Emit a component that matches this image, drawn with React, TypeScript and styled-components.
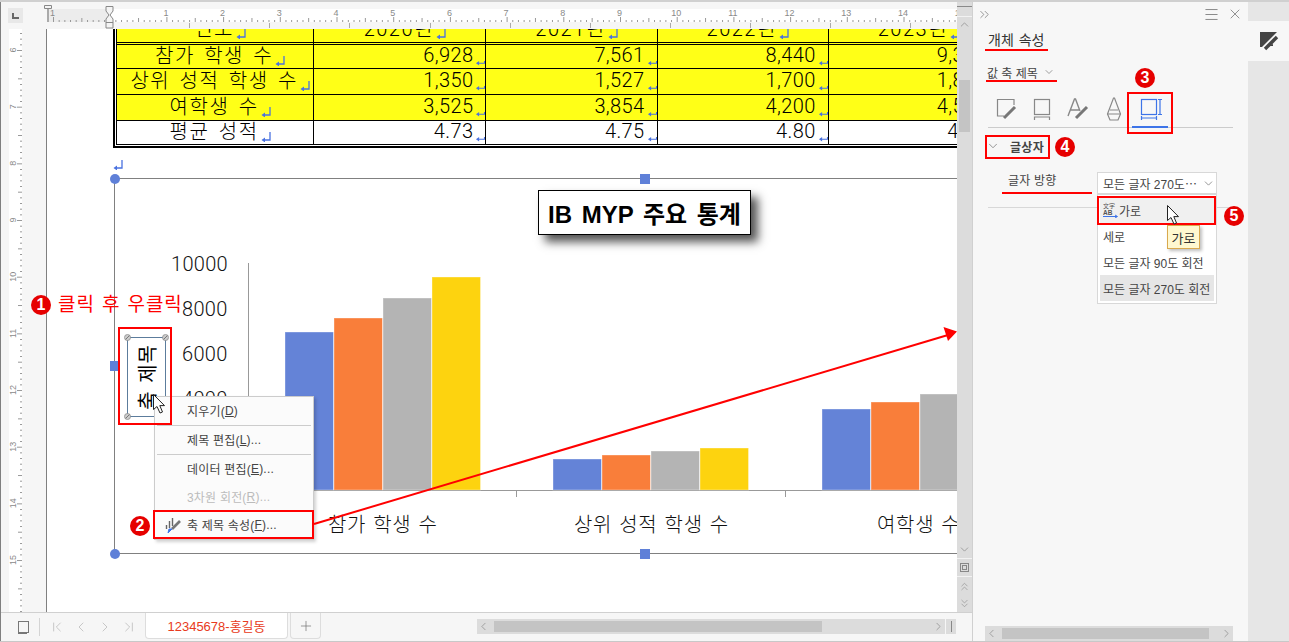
import * as React from 'react';
import styled, { createGlobalStyle } from 'styled-components';
import {
    ChevronDown,
    ChevronFirst,
    ChevronLast,
    ChevronLeft,
    ChevronRight,
    ChevronUp,
    ChevronsDown,
    ChevronsRight,
    ChevronsUp,
    Menu as MenuIcon,
    Plus,
    X,
} from 'lucide-react';

const UI_FONT = '"Liberation Sans", "Noto Sans CJK KR", sans-serif';
const THIN_FONT = 'Roboto, "Noto Sans CJK KR", sans-serif';

const GlobalStyle = createGlobalStyle`
    html, body {
        margin: 0;
        padding: 0;
        overflow: hidden;
        background: #fff;
    }
    * {
        box-sizing: border-box;
    }
`;

const Shell = styled.div`
    position: relative;
    display: flex;
    width: 1289px;
    height: 642px;
    overflow: hidden;
    border-top: 2px solid #d0d0d0;
    border-bottom: 1px solid #c8c8c8;
    background: #f6f6f6;
    font-family: ${UI_FONT};
    color: #444;
`;

const EditorColumn = styled.div`
    display: flex;
    flex-direction: column;
    width: 973px;
    flex-shrink: 0;
    border-left: 1px solid #808080;
    border-right: 1px solid #d0d0d0;
`;

const EditorTop = styled.div`
    display: flex;
    height: 610px;
`;

const EditorMain = styled.div`
    display: flex;
    flex-direction: column;
    width: 956px;
`;

const RulerRow = styled.div`
    display: flex;
    height: 27px;
    flex-shrink: 0;
`;

const RulerCorner = styled.div`
    width: 15px;
    height: 15px;
    margin: 6px 0 0 7px;
    background: #e8e8e8;
    display: flex;
    align-items: center;
    justify-content: center;
    flex-shrink: 0;
`;

const CornerMark = styled.span`
    display: block;
    width: 7px;
    height: 6px;
    border-left: 2px solid #666;
    border-bottom: 2px solid #666;
`;

const RulerSvg = styled.svg`
    display: block;
    margin-left: 20px;
    flex-shrink: 0;
`;

const RulerLabel = styled.text`
    font-family: ${UI_FONT};
    font-size: 9px;
    fill: #8a8a8a;
`;

const BodyRow = styled.div`
    display: flex;
    flex: 1;
    min-height: 0;
`;

const SideRuler = styled.svg`
    display: block;
    width: 46px;
    height: 583px;
    flex-shrink: 0;
    border-right: 1px solid #808080;
`;

const Page = styled.div`
    position: relative;
    width: 910px;
    height: 583px;
    overflow: hidden;
    background: #fff;
`;

const TableFrame = styled.div`
    width: 1000px;
    margin: -11px 0 0 66px;
    padding: 0 1px 1px 1px;
    border-left: 2px solid #000;
    border-bottom: 2px solid #000;
`;

const DataTable = styled.table`
    border-collapse: separate;
    border-spacing: 0;
    table-layout: fixed;
    width: 884px;
    border-left: 1px solid #000;
    color: #000;
`;

const Cell = styled.td<{ $head?: boolean; $plain?: boolean; $h: number; $num?: boolean; $name?: boolean }>`
    height: ${p => p.$h}px;
    padding: 0 0 2px ${p => (p.$name ? '10px' : '0')};
    background: ${p => (p.$plain ? '#fff' : '#ffff17')};
    border-right: 1px solid #000;
    border-bottom: ${p => (p.$head ? '3px double #000' : '1px solid #000')};
    text-align: ${p => (p.$num ? 'right' : 'center')};
    white-space: nowrap;
    font-family: ${THIN_FONT};
    font-size: 20px;
    font-weight: 300;
    line-height: 20px;
    letter-spacing: ${p => (p.$num ? '0.4px' : '1.5px')};
    word-spacing: 3px;
    vertical-align: middle;
`;

const ReturnSvg = styled.svg<{ $small?: boolean }>`
    display: inline-block;
    width: ${p => (p.$small ? 9 : 10)}px;
    height: 10px;
    margin-left: ${p => (p.$small ? 3 : 2)}px;
    vertical-align: ${p => (p.$small ? '-4px' : '-3px')};
`;

const ReturnMark: React.FC<{ small?: boolean }> = ({ small }) => (
    <ReturnSvg $small={small} viewBox="0 0 10 10" fill="none" stroke="#4a72e0" strokeWidth="1.3">
        {small ? (
            <>
                <path d="M1 7.5H9.5M9.5 5V8" />
                <path d="M3.5 5V10L0 7.5Z" fill="#4a72e0" stroke="none" />
            </>
        ) : (
            <>
                <path d="M9 0V8H2" />
                <path d="M4 5.5V10.5L0.5 8Z" fill="#4a72e0" stroke="none" />
            </>
        )}
    </ReturnSvg>
);

const AnchorMark = styled.div`
    height: 30px;
    margin-left: 64px;
    padding-top: 9px;
    line-height: 10px;
`;

const ChartFrame = styled.div`
    position: relative;
    width: 900px;
    height: 376px;
    margin-left: 67px;
    border-left: 1px solid #808080;
    border-top: 1px solid #808080;
    border-bottom: 1px solid #808080;
`;

const ChartSvg = styled.svg`
    position: absolute;
    left: -1px;
    top: -1px;
    display: block;
`;

const AxisText = styled.text<{ $wide?: boolean }>`
    font-family: ${THIN_FONT};
    font-weight: 300;
    font-size: 20px;
    letter-spacing: ${p => (p.$wide ? '0.7px' : '0.3px')};
    word-spacing: ${p => (p.$wide ? '1.5px' : '0')};
    fill: #111;
    dominant-baseline: middle;
`;

const Handle = styled.span<{ $x: number; $y: number; $round?: boolean }>`
    position: absolute;
    left: ${p => p.$x - 5}px;
    top: ${p => p.$y - 5}px;
    width: 10px;
    height: 10px;
    background: #5f80d8;
    border-radius: ${p => (p.$round ? '50%' : '0')};
`;

const ChartTitle = styled.div`
    position: absolute;
    left: 423px;
    top: 11px;
    width: 213px;
    height: 45px;
    display: flex;
    align-items: center;
    justify-content: center;
    background: #fff;
    border: 1px solid #000;
    box-shadow: 7px 7px 9px #555;
    color: #000;
    font-size: 24px;
    font-weight: 700;
    word-spacing: 3px;
    white-space: nowrap;
`;

const AxisTitleBox = styled.div`
    position: absolute;
    left: 12px;
    top: 158px;
    width: 39px;
    height: 80px;
    display: flex;
    align-items: center;
    justify-content: center;
    border: 1px solid #5c7c9c;
`;

const AxisTitleText = styled.span`
    writing-mode: vertical-rl;
    text-orientation: sideways;
    transform: rotate(180deg);
    color: #000;
    font-size: 20px;
    font-weight: 400;
    letter-spacing: 1px;
    word-spacing: 1px;
    white-space: nowrap;
`;

const Grip = styled.span<{ $right?: boolean; $bottom?: boolean }>`
    position: absolute;
    ${p => (p.$right ? 'right: -4px;' : 'left: -4px;')}
    ${p => (p.$bottom ? 'bottom: -4px;' : 'top: -4px;')}
    width: 7px;
    height: 7px;
    border-radius: 50%;
    background: linear-gradient(135deg, #ccc 0 42%, #777 42% 58%, #ccc 58% 100%);
    border: 1px solid #999;
`;

const VScroll = styled.div`
    display: flex;
    flex-direction: column;
    width: 15px;
    flex-shrink: 0;
    background: #dcdcdc;
    color: #8e8e8e;
`;

const SplitTop = styled.div`
    height: 11px;
    margin-top: 4px;
    border-top: 1px solid #8a8a8a;
    border-bottom: 1px solid #f2f2f2;
    flex-shrink: 0;
`;

const ScrollBtn = styled.div<{ $h: number; $line?: boolean }>`
    height: ${p => p.$h}px;
    display: flex;
    align-items: center;
    justify-content: center;
    flex-shrink: 0;
    border-bottom: ${p => (p.$line ? '1px solid #f2f2f2' : 'none')};
`;

const VTrack = styled.div`
    flex: 1;
    padding: 49px 2px 0;
`;

const VThumb = styled.div`
    height: 52px;
    background: #c4c4c4;
`;

const TabBar = styled.div`
    display: flex;
    align-items: flex-start;
    height: 29px;
    flex-shrink: 0;
    border-top: 1px solid #d0d0d0;
    color: #bbb;
`;

const SheetIcon = styled.div`
    width: 11px;
    height: 12px;
    margin: 8px 10px 0 17px;
    border: 1px solid #777;
    box-shadow: -1px 2px 0 -1px #777;
`;

const NavDivider = styled.div`
    width: 1px;
    height: 18px;
    margin: 5px 5px 0 0;
    background: #d4d4d4;
`;

const NavButton = styled.div`
    width: 24px;
    height: 28px;
    display: flex;
    align-items: center;
    justify-content: center;
    flex-shrink: 0;
`;

const SheetTab = styled.div`
    width: 143px;
    height: 26px;
    margin-left: 4px;
    display: flex;
    align-items: center;
    justify-content: center;
    background: #fff;
    border: 1px solid #ddd;
    border-top: none;
    border-radius: 0 0 4px 4px;
    color: #e83a20;
    font-size: 13px;
    flex-shrink: 0;
`;

const AddTab = styled.div`
    width: 31px;
    height: 26px;
    margin-left: 2px;
    display: flex;
    align-items: center;
    justify-content: center;
    border: 1px solid #ddd;
    border-top: none;
    border-radius: 0 0 4px 4px;
    color: #777;
    flex-shrink: 0;
`;

const Splitter = styled.div`
    width: 3px;
    height: 28px;
    margin-left: 152px;
    background-image: radial-gradient(#777 45%, transparent 50%);
    background-size: 2px 2px;
    flex-shrink: 0;
`;

const HScroll = styled.div<{ $w: number }>`
    display: flex;
    align-items: center;
    justify-content: space-between;
    width: ${p => p.$w}px;
    height: 15px;
    background: #dcdcdc;
    color: #888;
    flex-shrink: 0;
`;

const HScrollSlot = styled.div`
    margin: 6px 0 0 1px;
`;

const HThumb = styled.div<{ $w: number; $left: number }>`
    position: relative;
    flex: none;
    width: ${p => p.$w}px;
    height: 11px;
    margin-left: ${p => p.$left}px;
    margin-right: auto;
    background: #c4c4c4;
`;

const SplitEnd = styled.div`
    width: 10px;
    height: 15px;
    margin: 6px 0 0 1px;
    background: #dcdcdc;
    display: flex;
    justify-content: center;
    align-items: center;
`;

const SplitEndLine = styled.span`
    width: 1px;
    height: 11px;
    background: #888;
`;

const Panel = styled.aside`
    position: relative;
    display: flex;
    flex-direction: column;
    width: 275px;
    flex-shrink: 0;
    background: #f7f7f7;
`;

const PanelHead = styled.div`
    display: flex;
    align-items: center;
    height: 24px;
    padding: 0 1px 0 4px;
    color: #777;
`;

const PanelHeadGap = styled.div`
    flex: 1;
`;

const PanelHeadBtn = styled.div`
    width: 24px;
    display: flex;
    justify-content: center;
`;

const PanelTitle = styled.div`
    height: 28px;
    margin-left: 15px;
    line-height: 28px;
    font-size: 14px;
    color: #333;
    word-spacing: 1px;
`;

const ObjectPicker = styled.div`
    display: flex;
    align-items: center;
    gap: 5px;
    height: 24px;
    margin: 6px 0 0 14px;
    font-size: 12px;
    color: #444;
`;

const IconTabs = styled.div`
    display: flex;
    height: 35px;
    margin: 9px 15px 0;
    border-bottom: 1px solid #ccc;
`;

const IconTab = styled.div<{ $active?: boolean }>`
    width: 36px;
    height: 35px;
    display: flex;
    justify-content: center;
    padding-top: 1px;
    border-bottom: ${p => (p.$active ? '2px solid #3d74e8' : 'none')};
`;

const SectionHead = styled.div`
    display: flex;
    align-items: center;
    height: 22px;
    margin: 7px 0 0 13px;
    font-size: 12px;
    font-weight: 700;
    color: #444;
`;

const SectionLabel = styled.span`
    margin-left: 10px;
    letter-spacing: 0.3px;
`;

const FieldRow = styled.div`
    position: relative;
    display: flex;
    height: 36px;
    margin: 15px 15px 0;
    border-bottom: 1px solid #d8d8d8;
`;

const FieldLabel = styled.div`
    width: 109px;
    height: 21px;
    padding-left: 20px;
    line-height: 18px;
    font-size: 12px;
    letter-spacing: 0.2px;
`;

const SelectBox = styled.div`
    position: relative;
    width: 120px;
    height: 22px;
    display: flex;
    align-items: center;
    justify-content: space-between;
    padding: 0 1px 0 5px;
    background: #fff;
    border: 1px solid #d8d8d8;
    font-size: 12px;
    white-space: nowrap;
`;

const OptionList = styled.div`
    position: absolute;
    left: -1px;
    top: 21px;
    width: 120px;
    padding: 2px;
    background: #fff;
    border: 1px solid #d8d8d8;
`;

const Option = styled.div<{ $hover?: boolean; $selected?: boolean }>`
    display: flex;
    align-items: center;
    height: 26px;
    padding-left: 3px;
    font-size: 12px;
    background: ${p => (p.$selected ? '#e6e6e6' : p.$hover ? '#f0f0f0' : 'transparent')};
`;

const TipBox = styled.div`
    position: absolute;
    left: 69px;
    top: 30px;
    width: 33px;
    height: 24px;
    display: flex;
    align-items: center;
    justify-content: center;
    background: #fff8d0;
    border: 1px solid #d9a94e;
    box-shadow: 2px 2px 3px rgba(0, 0, 0, 0.25);
    font-size: 13px;
    color: #333;
`;

const PanelFoot = styled.div`
    margin: auto 15px 0 12px;
`;

const Rail = styled.div`
    flex: 1;
    padding-top: 19px;
    background: #e6e6e6;
`;

const RailTab = styled.div`
    height: 40px;
    display: flex;
    align-items: center;
    justify-content: center;
    background: #f7f7f7;
`;

const ContextMenu = styled.div`
    position: absolute;
    left: 154px;
    top: 394px;
    width: 160px;
    background: #fbfbfb;
    border: 1px solid #ccc;
    box-shadow: 2px 2px 3px rgba(0, 0, 0, 0.18);
    font-size: 12px;
    letter-spacing: 0.2px;
    color: #444;
`;

const MenuItem = styled.div<{ $disabled?: boolean }>`
    display: flex;
    align-items: center;
    height: 28px;
    padding-left: 32px;
    padding-bottom: 1px;
    position: relative;
    color: ${p => (p.$disabled ? '#bbb' : '#444')};
    white-space: nowrap;
`;

const MenuIconBox = styled.span`
    position: absolute;
    left: 9px;
    top: 5px;
    display: flex;
`;

const MenuLine = styled.div`
    height: 1px;
    margin: 0 2px;
    background: #ccc;
`;

const RedBox = styled.div<{ $x: number; $y: number; $w: number; $h: number }>`
    position: absolute;
    left: ${p => p.$x}px;
    top: ${p => p.$y - 2}px;
    width: ${p => p.$w}px;
    height: ${p => p.$h}px;
    border: 2px solid #f00;
    pointer-events: none;
`;

const RedLine = styled.div<{ $x: number; $y: number; $w: number }>`
    position: absolute;
    left: ${p => p.$x}px;
    top: ${p => p.$y - 2}px;
    width: ${p => p.$w}px;
    height: 2px;
    background: #f00;
`;

const Badge = styled.div<{ $x: number; $y: number }>`
    position: absolute;
    left: ${p => p.$x - 10}px;
    top: ${p => p.$y - 12}px;
    width: 20px;
    height: 20px;
    border-radius: 50%;
    background: #e60000;
    display: flex;
    align-items: center;
    justify-content: center;
    color: #fff;
    font-size: 16px;
    font-weight: 700;
`;

const RedNote = styled.div`
    position: absolute;
    left: 58px;
    top: 291px;
    color: #f00;
    font-size: 19px;
    letter-spacing: 0.9px;
    word-spacing: 1px;
    line-height: 24px;
    white-space: nowrap;
`;

const OverlaySvg = styled.svg`
    position: absolute;
    left: 0;
    top: -2px;
    pointer-events: none;
`;

const CursorSvg = styled.svg<{ $x: number; $y: number }>`
    position: absolute;
    left: ${p => p.$x}px;
    top: ${p => p.$y - 2}px;
    pointer-events: none;
`;

const Cursor: React.FC<{ x: number; y: number }> = ({ x, y }) => (
    <CursorSvg $x={x} $y={y} width="14" height="20" viewBox="0 0 14 20">
        <path d="M.5.5V15.5L4 12.5L7 19L9.5 18L6.8 11.6H11.5Z" fill="#fff" stroke="#222" strokeWidth="1" />
    </CursorSvg>
);

const rows = [
    { name: '참가 학생 수', values: ['6,928', '7,561', '8,440', '9,300'], h: 24 },
    { name: '상위 성적 학생 수', values: ['1,350', '1,527', '1,700', '1,850'], h: 26 },
    { name: '여학생 수', values: ['3,525', '3,854', '4,200', '4,500'], h: 26 },
    { name: '평균 성적', values: ['4.73', '4.75', '4.80', '4.85'], h: 23, plain: true },
];

const years = ['2020년', '2021년', '2022년', '2023년'];

const barColors = ['#6483d7', '#f97e3a', '#b4b4b4', '#fdd30f'];

const barGroups = [
    { x: 285, tops: [332, 318, 298, 277] },
    { x: 553, tops: [459, 455, 451, 448] },
    { x: 822, tops: [409, 402, 394, 380] },
];

const range = (n: number) => Array.from({ length: n }, (_, i) => i);

const TopRulerDrawing = () => {
    const labels = ['1', '', '1', '2', '3', '4', '5', '6', '7', '8', '9', '10', '11', '12', '13', '14', '15'];
    const tabs = [189, 269, 349, 430, 510, 590, 670, 750, 830, 910];
    return (
        <RulerSvg width="914" height="27" viewBox="43 2 914 27">
            <rect x="47" y="9" width="910" height="13" fill="#fff" />
            <rect x="47" y="9" width="63" height="13" fill="#ececec" />
            <rect x="47" y="6" width="2" height="16" fill="#aaa" />
            {range(160).map(i => {
                const x = 53 + i * 5.67;
                const major = i % 10 === 0;
                const mid = i % 5 === 0;
                return (
                    <rect key={i} x={x} y={major ? 17 : mid ? 18 : 20} width="1" height={major ? 5 : mid ? 4 : 2} fill="#999" />
                );
            })}
            {labels.map((l, i) => (
                <RulerLabel key={i} x={52.5 + i * 56.7} y="16" textAnchor="middle">
                    {l}
                </RulerLabel>
            ))}
            {tabs.map(x => (
                <rect key={x} x={x} y="23" width="1" height="5" fill="#aaa" />
            ))}
            <path d="M44.5 5.5H51.5V8.5H44.5Z" fill="#f4f4f4" stroke="#888" />
            <path d="M106 6.5H113V11L110 15L113 19V28H106V19L109 15L106 11Z" fill="#f4f4f4" stroke="#888" />
            <path d="M106 22.5H113" stroke="#888" />
        </RulerSvg>
    );
};

const SideRulerDrawing = () => (
    <SideRuler viewBox="1 29 45 583">
        <rect x="9" y="29" width="13" height="583" fill="#fff" />
        {range(120).map(i => {
            const y = 50 - 56.67 + i * 5.667;
            const major = i % 10 === 0;
            const mid = i % 5 === 0;
            return <rect key={i} x={major ? 17 : mid ? 18 : 20} y={y} width={major ? 5 : mid ? 4 : 2} height="1" fill="#999" />;
        })}
        {range(10).map(i => (
            <RulerLabel key={i} textAnchor="middle" transform={`translate(16 ${50 + i * 56.67}) rotate(-90)`} y="0">
                {6 + i}
            </RulerLabel>
        ))}
    </SideRuler>
);

const ChartDrawing = () => (
    <ChartSvg width="843" height="376" viewBox="114 178 843 376">
        <path d="M248.5 263V490.5H957M516.5 490V497M785.5 490V497M248.5 490V497" fill="none" stroke="#999" />
        {barGroups.map(g =>
            g.tops.map((top, i) => (
                <rect
                    key={`${g.x}-${i}`}
                    x={g.x + i * 49}
                    y={top}
                    width="48.5"
                    height={490 - top}
                    fill={barColors[i]}
                    stroke="#fff"
                    strokeOpacity="0.35"
                />
            )),
        )}
        <AxisText x="171" y="266">10000</AxisText>
        <AxisText x="182" y="311">8000</AxisText>
        <AxisText x="182" y="356">6000</AxisText>
        <AxisText x="182" y="401">4000</AxisText>
        <AxisText x="328" y="527" $wide>참가 학생 수</AxisText>
        <AxisText x="574" y="527" $wide>상위 성적 학생 수</AxisText>
        <AxisText x="877" y="527" $wide>여학생 수</AxisText>
    </ChartSvg>
);

const FillTabIcon = () => (
    <svg width="24" height="30" viewBox="0 0 24 30" fill="none" stroke="#888" strokeWidth="1.2">
        <path d="M10 22H3.5V5.5H20V11" />
        <path d="M21 13L10 24" stroke="#777" strokeWidth="3" />
    </svg>
);

const LineTabIcon = () => (
    <svg width="24" height="30" viewBox="0 0 24 30" fill="none" stroke="#888" strokeWidth="1.2">
        <rect x="4.5" y="5.5" width="15" height="15" />
        <path d="M4.5 26V23H19.5V26" />
    </svg>
);

const TextFillIcon = () => (
    <svg width="24" height="30" viewBox="0 0 24 30" fill="none" stroke="#888" strokeWidth="1.4">
        <path d="M2 22L8.5 5H9.5L14 17M4.5 16H13" />
        <path d="M21 13L10 24" stroke="#777" strokeWidth="3" />
    </svg>
);

const TextLineIcon = () => (
    <svg width="24" height="30" viewBox="0 0 24 30" fill="none" stroke="#888" strokeWidth="1.2">
        <path d="M11.5 4H12.5L18.5 20L16 26H8L5.5 20Z" />
        <path d="M8 16H16M5.5 20H18.5" />
    </svg>
);

const BoxTabIcon = () => (
    <svg width="24" height="30" viewBox="0 0 24 30" fill="none" stroke="#3d74e8" strokeWidth="1.2">
        <rect x="3.5" y="5.5" width="15" height="15" />
        <path d="M20 5.5H24M22 5.5V20.5M20 20.5H24M3.5 22V26M3.5 24H18.5M18.5 22V26" />
    </svg>
);

const RailPenIcon = () => (
    <svg width="22" height="22" viewBox="0 0 22 22">
        <path d="M2 2H19L8 13L4 17H2Z" fill="#444" />
        <path d="M19 7L7 19" stroke="#444" strokeWidth="3.4" fill="none" />
        <path d="M15 14V16H10Z" fill="#444" />
    </svg>
);

const AxisPropIcon = () => (
    <svg width="18" height="18" viewBox="0 0 18 18" fill="none">
        <path d="M2.5 9V13M5.5 5V12M8.5 2V10" stroke="#666" strokeWidth="1.4" />
        <path d="M16 5L8 13" stroke="#777" strokeWidth="2.6" />
        <path d="M8 13L4 17L5 13Z" fill="#3d74e8" stroke="#3d74e8" />
    </svg>
);

const HorizontalIcon = () => (
    <svg width="16" height="16" viewBox="0 0 16 16" fill="#555">
        <text x="0" y="6" fontSize="6" fontFamily={UI_FONT}>文字</text>
        <text x="0" y="12.5" fontSize="6.5" fontWeight="700" fontFamily={UI_FONT}>AB</text>
        <path d="M0 14.5H14M12 13L14.5 14.5L12 16" stroke="#3d74e8" fill="none" />
    </svg>
);

export default function App() {
    return (
        <>
            <GlobalStyle />
            <Shell>
                <EditorColumn>
                    <EditorTop>
                        <EditorMain>
                            <RulerRow>
                                <RulerCorner>
                                    <CornerMark />
                                </RulerCorner>
                                <TopRulerDrawing />
                            </RulerRow>
                            <BodyRow>
                                <SideRulerDrawing />
                                <Page>
                                    <TableFrame>
                                        <DataTable>
                                            <colgroup>
                                                <col width="197" />
                                                <col width="172" />
                                                <col width="171" />
                                                <col width="171" />
                                                <col width="171" />
                                            </colgroup>
                                            <tbody>
                                                <tr>
                                                    <Cell $h={27} $head $name>연도<ReturnMark /></Cell>
                                                    {years.map(y => (
                                                        <Cell key={y} $h={27} $head $name>{y}<ReturnMark /></Cell>
                                                    ))}
                                                </tr>
                                                {rows.map(r => (
                                                    <tr key={r.name}>
                                                        <Cell $h={r.h} $plain={r.plain} $name>{r.name}<ReturnMark /></Cell>
                                                        {r.values.map(v => (
                                                            <Cell key={v} $h={r.h} $plain={r.plain} $num>{v}<ReturnMark small /></Cell>
                                                        ))}
                                                    </tr>
                                                ))}
                                            </tbody>
                                        </DataTable>
                                    </TableFrame>
                                    <AnchorMark>
                                        <ReturnMark />
                                    </AnchorMark>
                                    <ChartFrame>
                                        <ChartDrawing />
                                        <ChartTitle>IB MYP 주요 통계</ChartTitle>
                                        <AxisTitleBox>
                                            <AxisTitleText>축 제목</AxisTitleText>
                                            <Grip />
                                            <Grip $right />
                                            <Grip $bottom />
                                            <Grip $right $bottom />
                                        </AxisTitleBox>
                                        <Handle $x={0} $y={0} $round />
                                        <Handle $x={530} $y={0} />
                                        <Handle $x={0} $y={187} />
                                        <Handle $x={0} $y={375} $round />
                                        <Handle $x={530} $y={375} />
                                    </ChartFrame>
                                </Page>
                            </BodyRow>
                        </EditorMain>
                        <VScroll>
                            <SplitTop />
                            <ScrollBtn $h={14}><ChevronUp size={13} strokeWidth={1.4} /></ScrollBtn>
                            <VTrack><VThumb /></VTrack>
                            <ScrollBtn $h={19} $line><ChevronDown size={13} strokeWidth={1.4} /></ScrollBtn>
                            <ScrollBtn $h={18} $line>
                                <svg width="9" height="9" viewBox="0 0 9 9" fill="none" stroke="#888"><rect x=".5" y=".5" width="8" height="8" /><rect x="2.5" y="2.5" width="4" height="4" /></svg>
                            </ScrollBtn>
                            <ScrollBtn $h={18}><ChevronsUp size={13} strokeWidth={1.2} /></ScrollBtn>
                            <ScrollBtn $h={17}><ChevronsDown size={13} strokeWidth={1.2} /></ScrollBtn>
                        </VScroll>
                    </EditorTop>
                    <TabBar>
                        <SheetIcon />
                        <NavDivider />
                        <NavButton><ChevronFirst size={16} strokeWidth={1.2} /></NavButton>
                        <NavButton><ChevronLeft size={16} strokeWidth={1.2} /></NavButton>
                        <NavButton><ChevronRight size={16} strokeWidth={1.2} /></NavButton>
                        <NavButton><ChevronLast size={16} strokeWidth={1.2} /></NavButton>
                        <SheetTab>12345678-홍길동</SheetTab>
                        <AddTab><Plus size={16} strokeWidth={1.1} /></AddTab>
                        <Splitter />
                        <HScrollSlot>
                            <HScroll $w={468}>
                                <ChevronLeft size={13} strokeWidth={1.3} />
                                <HThumb $w={328} $left={4} />
                                <ChevronRight size={13} strokeWidth={1.3} />
                            </HScroll>
                        </HScrollSlot>
                        <SplitEnd><SplitEndLine /></SplitEnd>
                    </TabBar>
                </EditorColumn>
                <Panel>
                    <PanelHead>
                        <ChevronsRight size={15} strokeWidth={1.2} />
                        <PanelHeadGap />
                        <PanelHeadBtn><MenuIcon size={17} strokeWidth={1.2} /></PanelHeadBtn>
                        <PanelHeadBtn><X size={16} strokeWidth={1.2} /></PanelHeadBtn>
                    </PanelHead>
                    <PanelTitle>개체 속성</PanelTitle>
                    <ObjectPicker>
                        값 축 제목
                        <ChevronDown size={12} strokeWidth={1.4} color="#777" />
                    </ObjectPicker>
                    <IconTabs>
                        <IconTab><FillTabIcon /></IconTab>
                        <IconTab><LineTabIcon /></IconTab>
                        <IconTab><TextFillIcon /></IconTab>
                        <IconTab><TextLineIcon /></IconTab>
                        <IconTab $active><BoxTabIcon /></IconTab>
                    </IconTabs>
                    <SectionHead>
                        <ChevronDown size={14} strokeWidth={1.3} color="#777" />
                        <SectionLabel>글상자</SectionLabel>
                    </SectionHead>
                    <FieldRow>
                        <FieldLabel>글자 방향</FieldLabel>
                        <SelectBox>
                            모든 글자 270도⋯
                            <ChevronDown size={13} strokeWidth={1.4} color="#777" />
                            <OptionList>
                                <Option $hover><HorizontalIcon />가로</Option>
                                <Option>세로</Option>
                                <Option>모든 글자 90도 회전</Option>
                                <Option $selected>모든 글자 270도 회전</Option>
                                <TipBox>가로</TipBox>
                            </OptionList>
                        </SelectBox>
                    </FieldRow>
                    <PanelFoot>
                        <HScroll $w={248}>
                            <ChevronLeft size={13} strokeWidth={1.3} />
                            <HThumb $w={207} $left={4} />
                            <ChevronRight size={13} strokeWidth={1.3} />
                        </HScroll>
                    </PanelFoot>
                </Panel>
                <Rail>
                    <RailTab><RailPenIcon /></RailTab>
                </Rail>

                <ContextMenu>
                    <MenuItem>지우기(<u>D</u>)</MenuItem>
                    <MenuLine />
                    <MenuItem>제목 편집(<u>L</u>)...</MenuItem>
                    <MenuLine />
                    <MenuItem>데이터 편집(<u>E</u>)...</MenuItem>
                    <MenuItem $disabled>3차원 회전(<u>R</u>)...</MenuItem>
                    <MenuItem>
                        <MenuIconBox><AxisPropIcon /></MenuIconBox>
                        축 제목 속성(<u>F</u>)...
                    </MenuItem>
                </ContextMenu>

                <OverlaySvg width="1289" height="642" viewBox="0 0 1289 642">
                    <path d="M314 524L948 335" stroke="#f00" strokeWidth="2" fill="none" />
                    <path d="M957 331.5L943.5 327L948 341Z" fill="#f00" />
                </OverlaySvg>
                <RedNote>클릭 후 우클릭</RedNote>
                <RedBox $x={118} $y={327} $w={54} $h={98} />
                <RedBox $x={153} $y={510} $w={161} $h={29} />
                <RedBox $x={1127} $y={92} $w={46} $h={42} />
                <RedBox $x={985} $y={135} $w={65} $h={24} />
                <RedBox $x={1097} $y={196} $w={119} $h={29} />
                <RedLine $x={985} $y={49} $w={63} />
                <RedLine $x={986} $y={80} $w={71} />
                <RedLine $x={1002} $y={192} $w={90} />
                <Badge $x={41} $y={305}>1</Badge>
                <Badge $x={140} $y={526}>2</Badge>
                <Badge $x={1145} $y={78}>3</Badge>
                <Badge $x={1065} $y={147}>4</Badge>
                <Badge $x={1234} $y={216}>5</Badge>
                <Cursor x={153} y={394} />
                <Cursor x={1167} y={205} />
            </Shell>
        </>
    );
}
